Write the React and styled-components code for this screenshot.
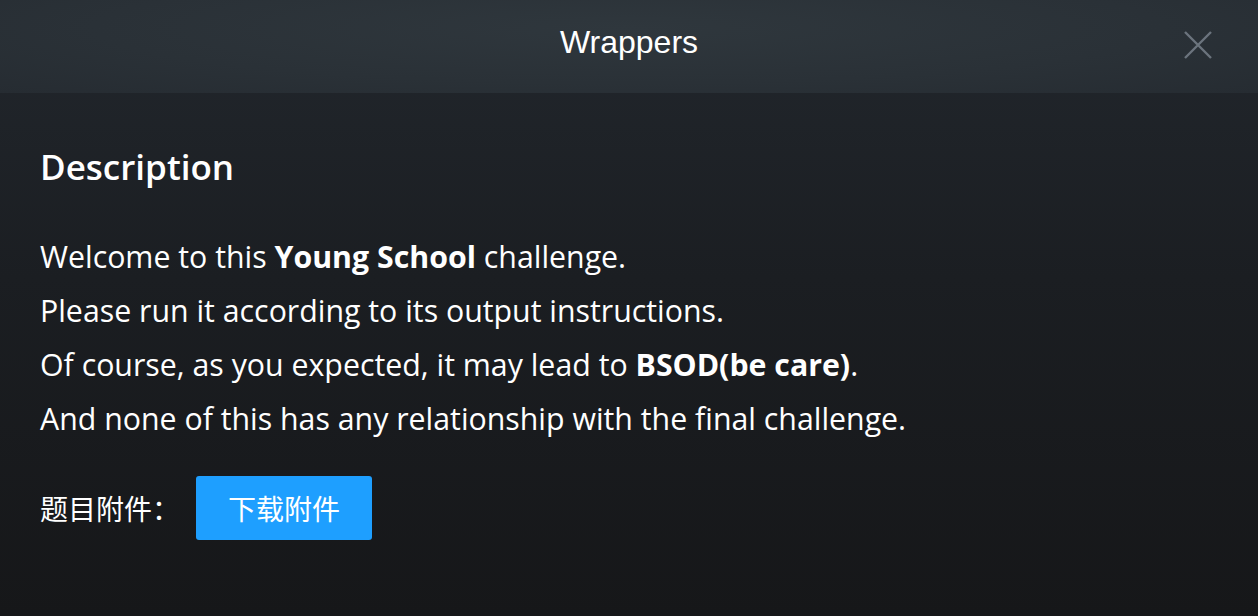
import React from "react";
import styled, { createGlobalStyle } from "styled-components";

const Global = createGlobalStyle`
  html, body { margin: 0; padding: 0; background: #17181b; }
  body { width: 1258px; height: 616px; overflow: hidden; }
`;

const Modal = styled.div`
  width: 1258px;
  height: 616px;
  display: flex;
  flex-direction: column;
  background: linear-gradient(180deg, #22272d 0%, #1b1e22 45%, #161719 100%);
  color: #fff;
`;

const Header = styled.div`
  height: 93px;
  flex: none;
  display: flex;
  align-items: center;
  justify-content: center;
  position: relative;
  background: radial-gradient(ellipse at 50% 30%, #2f373d 0%, #2a3137 60%, #262c32 100%);
`;

const Title = styled.div`
  font-family: "Liberation Sans", Arial, sans-serif;
  font-size: 32px;
  color: #fff;
  margin-top: -9px;
`;

const Close = styled.button`
  position: absolute;
  right: 44px;
  top: 29px;
  width: 32px;
  height: 32px;
  padding: 0;
  border: 0;
  background: transparent;
  display: flex;
  align-items: center;
  justify-content: center;
`;

const Body = styled.div`
  padding: 46px 40px 0;
  font-family: "Open Sans", "Noto Sans CJK SC", sans-serif;
`;

const Heading = styled.h2`
  margin: 0 0 35px;
  font-size: 35px;
  font-weight: 600;
  line-height: 56px;
`;

const Para = styled.p`
  margin: 0;
  font-size: 30.3px;
  line-height: 54px;
  color: #fff;
  b { font-weight: 700; }
`;

const AttachRow = styled.div`
  display: flex;
  align-items: center;
  margin-top: 30px;
  gap: 16px;
`;

const AttachLabel = styled.span`
  font-family: "Noto Sans CJK SC", sans-serif;
  font-size: 28px;
  color: #fff;
`;

const Button = styled.button`
  width: 176px;
  height: 64px;
  border: 0;
  border-radius: 3px;
  background: #1e9fff;
  color: #fff;
  font-family: "Noto Sans CJK SC", sans-serif;
  font-size: 28px;
`;

export default function App() {
  return (
    <>
      <Global />
      <Modal>
        <Header>
          <Title>Wrappers</Title>
          <Close aria-label="close">
            <svg width="30" height="30" viewBox="0 0 30 30">
              <path d="M2 2L28 28M28 2L2 28" stroke="#6b747d" strokeWidth="2.4" strokeLinecap="butt" />
            </svg>
          </Close>
        </Header>
        <Body>
          <Heading>Description</Heading>
          <Para>Welcome to this <b>Young School</b> challenge.</Para>
          <Para>Please run it according to its output instructions.</Para>
          <Para>Of course, as you expected, it may lead to <b>BSOD(be care)</b>.</Para>
          <Para>And none of this has any relationship with the final challenge.</Para>
          <AttachRow>
            <AttachLabel>题目附件：</AttachLabel>
            <Button>下载附件</Button>
          </AttachRow>
        </Body>
      </Modal>
    </>
  );
}
